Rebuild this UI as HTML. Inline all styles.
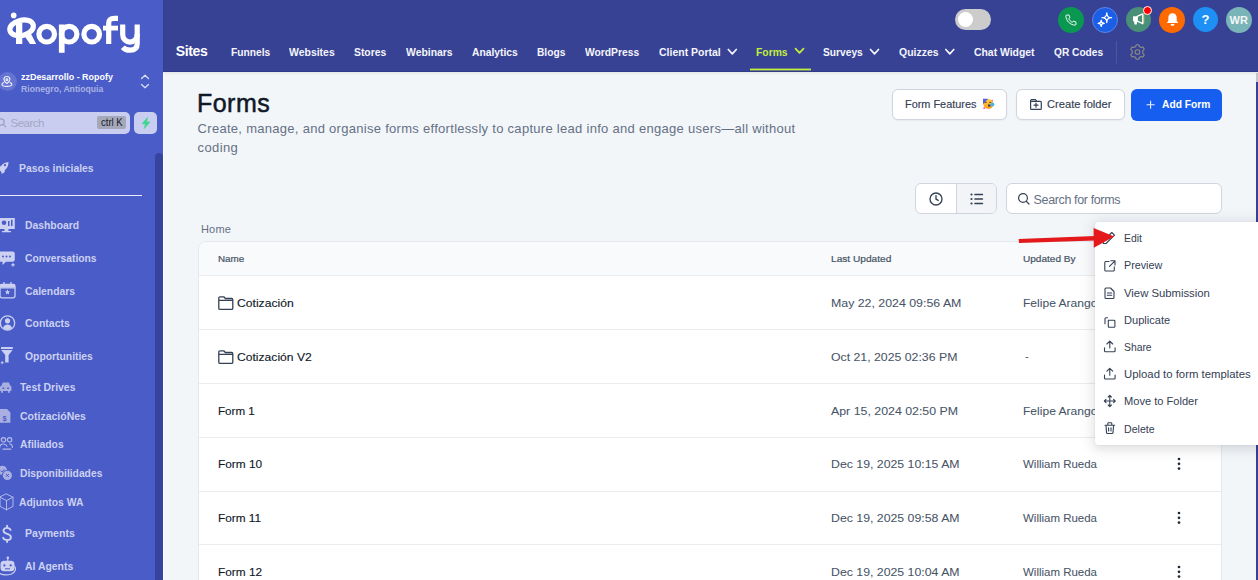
<!DOCTYPE html>
<html><head><meta charset="utf-8">
<style>
*{margin:0;padding:0;box-sizing:border-box}
html,body{width:1258px;height:580px;overflow:hidden;background:#f2f6f9;font-family:"Liberation Sans",sans-serif}
.a{position:absolute}
.t{position:absolute;white-space:nowrap}
svg{position:absolute;overflow:visible}
</style></head><body>
<!-- sidebar -->
<div class="a" style="left:0;top:0;width:163px;height:580px;background:#495cc8"></div>
<!-- scrollbar thumb sidebar -->
<div class="a" style="left:155px;top:153px;width:8px;height:440px;background:#37449e;border-radius:4px 4px 0 0"></div>
<div class="a" style="left:163px;top:72px;width:1px;height:508px;background:#fbfcfd"></div>
<!-- top nav -->
<div class="a" style="left:163px;top:0;width:1095px;height:72px;background:#384294;border-left:1px solid #354090"></div>
<div class="a" style="left:163px;top:71px;width:1095px;height:1px;background:#2f3a88"></div>
<div class="a" style="left:163px;top:72px;width:1095px;height:1px;background:#e6e9e6"></div>
<div class="a" style="left:164px;top:73px;width:1092px;height:3px;background:linear-gradient(#e9edef,#f2f6f9)"></div>
<!-- right strip -->
<div class="a" style="left:1256px;top:73px;width:2px;height:9px;background:#c4c6cc"></div>
<div class="a" style="left:1256px;top:82px;width:2px;height:498px;background:#384294"></div>

<!-- logo -->
<svg width="162" height="60" style="left:0;top:0" viewBox="0 0 162 60">
 <g fill="none" stroke="#fff" stroke-width="5.2">
  <ellipse cx="21.6" cy="27.8" rx="12" ry="7.6" transform="rotate(-14 21.6 27.8)"/>
  <circle cx="46.7" cy="34.2" r="7.8"/>
  <circle cx="69.1" cy="34.2" r="7.8"/>
  <circle cx="91.7" cy="34.2" r="7.8"/>
  <path d="M108.7 44.1V23.5C108.7 19.2 111 18.3 114.5 18.3H118"/>
  <path d="M122.7 24.4V34.8A7.25 7.25 0 0 0 137.2 34.8V24.4"/>
  <path d="M137.2 34V43.5C137.2 48.5 134 50.2 130.2 50.2C127 50.2 124.5 49.2 122.8 47.2"/>
 </g>
 <g fill="#fff">
  <circle cx="13.7" cy="15.4" r="2.8"/>
  <rect x="16" y="23" width="6.3" height="21"/>
  <polygon points="23,33.8 29.8,31.6 36.2,44 30,44"/>
  <rect x="58.9" y="24.5" width="5.7" height="28.3"/>
  <rect x="103" y="25.7" width="15" height="4.8"/>
 </g>
</svg>

<!-- location -->
<div class="a" style="left:-2.4px;top:72.3px;width:19px;height:19px;border-radius:50%;background:rgba(255,255,255,0.15)"></div>
<svg width="20" height="20" style="left:0;top:72" viewBox="0 72 20 20">
 <g fill="none" stroke="#eef0fb" stroke-width="1.15" stroke-linecap="round">
  <path d="M6.9 83.6C5 82 3.9 80.9 3.9 79.5A3 3 0 0 1 9.9 79.5C9.9 80.9 8.8 82 6.9 83.6Z"/>
  <circle cx="6.9" cy="79.7" r="0.9"/>
  <path d="M3.6 82.6C2.5 83 2 83.6 2 84.2C2 85.5 4.2 86.4 6.9 86.4C9.6 86.4 11.8 85.5 11.8 84.2C11.8 83.6 11.3 83 10.2 82.6"/>
 </g>
</svg>
<svg width="12" height="18" style="left:139;top:73" viewBox="0 0 12 18">
 <g fill="none" stroke="#d8dcf4" stroke-width="1.3" stroke-linecap="round" stroke-linejoin="round">
  <path d="M2.5 5.5L6 2.2L9.5 5.5"/><path d="M2.5 11.5L6 14.8L9.5 11.5"/>
 </g>
</svg>

<!-- search -->
<div class="a" style="left:-5px;top:112.2px;width:135px;height:21.7px;border-radius:5px;background:#c9cdef"></div>
<svg width="10" height="10" style="left:-2;top:118" viewBox="0 0 10 10"><g fill="none" stroke="#9a9fbd" stroke-width="1.2"><circle cx="3" cy="4" r="3.2"/><path d="M5.3 6.4L8 9"/></g></svg>
<div class="a" style="left:97px;top:116.2px;width:29px;height:12.7px;border-radius:2px;background:#a5a8b8"></div>
<div class="a" style="left:134px;top:112px;width:23px;height:22px;border-radius:5px;background:#c9cdef"></div>
<svg width="12" height="12" style="left:140;top:117" viewBox="0 0 12 12"><path d="M7.6 0.5L2 6.8H5.4L4.2 11.6L10 5H6.6Z" fill="#3dd68c" stroke="#3dd68c" stroke-width="0.6" stroke-linejoin="round"/></svg>

<!-- sidebar divider -->
<div class="a" style="left:0;top:194.5px;width:142px;height:1.5px;background:#e9ebf8"></div>

<!-- sidebar icons -->
<svg width="30" height="400" style="left:0;top:160" viewBox="0 160 30 400">
 <g fill="#ccd1f1">
  <!-- rocket -->
  <path d="M8.5 162C5.2 162.2 2.6 163.8 0.8 166.3L-2.5 166.3L-3 170.2L0 170.6L1.5 172.2L1.6 174L4.6 172.2L4.9 170C7.3 168.3 8.5 165.5 8.5 162Z"/><circle cx="5" cy="165.2" r="1.1" fill="#495cc8"/>
  <!-- dashboard monitor -->
  <path d="M-1 218H14.8V229H8.5V231H11V232.2H2V231H4.5V229H-1Z"/>
 </g>
 <g fill="#495cc8">
  <circle cx="4" cy="222.8" r="2.3"/><rect x="8" y="221" width="1.5" height="5"/><rect x="11" y="219.8" width="1.5" height="6.2"/>
 </g>
 <g fill="#ccd1f1">
  <!-- conversations bubble -->
  <path d="M0 251.5H12.5A2.3 2.3 0 0 1 14.8 253.8V259.5A2.3 2.3 0 0 1 12.5 261.8H6L2.5 265V261.8H0A2.3 2.3 0 0 1 -2.3 259.5V253.8A2.3 2.3 0 0 1 0 251.5Z"/>
 </g>
 <g fill="#495cc8"><circle cx="3" cy="256.6" r="1"/><circle cx="6.5" cy="256.6" r="1"/><circle cx="10" cy="256.6" r="1"/></g>
 <g fill="none" stroke="#ccd1f1" stroke-width="1.3">
  <path d="M13 263.2V266.5M11.3 264.8H14.7"/>
  <!-- calendar -->
  <rect x="0" y="284.5" width="15" height="13.3" rx="2"/>
  <path d="M0 287.8H15M4 282V285.5M11 282V285.5"/>
  <!-- contacts -->
  <circle cx="7.5" cy="323" r="7.2"/>
 </g>
 <g fill="#ccd1f1">
  <path d="M7.50 289.30L8.23 291.19L10.26 291.30L8.69 292.59L9.20 294.55L7.50 293.45L5.80 294.55L6.31 292.59L4.74 291.30L6.77 291.19Z"/><rect x="0" y="284" width="15" height="3.6" rx="1"/>
  <circle cx="7.5" cy="320.8" r="2.6"/>
  <path d="M3 327.8C4 325.3 5.6 324.6 7.5 324.6C9.4 324.6 11 325.3 12 327.8C10.8 329.3 9.2 330 7.5 330C5.8 330 4.2 329.3 3 327.8Z"/>
  <!-- funnel -->
  <path d="M1 347H12.8V349H1Z M1.2 350H12.6L8.6 355V362.5H5.2V355Z"/>
  <path d="M2.2 361.2V364.2M0.7 362.7H3.7" stroke="#ccd1f1" stroke-width="0.9"/>
  <!-- car -->
  <path fill="#a9b0e1" d="M1.2 386.2L2.8 382.6H8.9L10.6 386.2H11.4V391H9.8V392.8H7.9V391H3V392.8H1.1V391H-0.5V386.2Z"/>
  <!-- doc $ -->
  <path fill="#a9b0e1" d="M-1 409H7L10.4 412.4V422.8H-1Z"/>
  <!-- people -->
 </g>
 <g fill="none" stroke="#495cc8" stroke-width="1.5"><path d="M2.5 388.3H4.2M7.2 388.3H8.9"/></g>
 <text x="2.5" y="420.5" font-family="Liberation Sans" font-weight="700" font-size="7.5" fill="#495cc8">$</text>
 <g fill="none" stroke="#ccd1f1" stroke-width="1.2" stroke-linecap="round">
  <g stroke="#b5bbe8"><circle cx="3.5" cy="439.8" r="2.2"/><circle cx="9.6" cy="439.8" r="2.2"/>
  <path d="M-0.5 449C-0.5 445.5 1.5 444 3.5 444C5.2 444 6.4 445 7 446.3M12.4 447.5C12.4 445 11 444 9.6 444"/>
  <path d="M3 449.2H10.8"/></g>
  <!-- disponibilidades -->
  <!-- cube -->
  <path d="M6.5 494L13 497.2V506.4L6.5 509.8L0 506.4V497.2Z M0 497.2L6.5 500.6L13 497.2 M6.5 500.6V509.8" stroke="#b3b9e8" stroke-width="1"/>
 </g>
 <g fill="#a9b0e1"><circle cx="2.4" cy="470.3" r="4.6"/><circle cx="7.4" cy="475.4" r="5.6" fill="#495cc8"/><circle cx="7.4" cy="475.4" r="4.6"/></g><path d="M0.5 470.5L2 472L4.5 469" fill="none" stroke="#495cc8" stroke-width="0.9"/>
 <g fill="none" stroke="#495cc8" stroke-width="1"><path d="M6 474L8.8 476.8M8.8 474L6 476.8"/></g>
 <path d="M10.6 530C10 528.6 8.7 527.9 7 527.9C4.9 527.9 3.5 529 3.5 530.8C3.5 535 10.9 532.9 10.9 537.2C10.9 539 9.4 540 7.1 540C5.1 540 3.8 539.2 3.1 537.8M7.1 525.8V527.9M7.1 540V542" fill="none" stroke="#ccd1f1" stroke-width="1.9" stroke-linecap="round"/>
 <g fill="#ccd1f1">
  <!-- robot -->
  <circle cx="7.8" cy="557.8" r="1.3"/><rect x="7.2" y="558" width="1.2" height="3"/>
  <rect x="0.5" y="560.8" width="14" height="10.5" rx="3.5"/>
 </g>
 <g fill="#495cc8"><rect x="3.3" y="564.2" width="2.2" height="2.4" rx="1"/><rect x="9.6" y="564.2" width="2.2" height="2.4" rx="1"/><rect x="5" y="568.3" width="5" height="1" /></g>
 <g fill="none" stroke="#ccd1f1" stroke-width="1.1"><path d="M14.5 566C16.5 568.5 15.5 572.8 11 574.2C7 575.2 2 574.6 0 573.6"/></g>
</svg>

<!-- top icons -->
<div class="a" style="left:955px;top:9px;width:36px;height:21px;border-radius:11px;background:#cccccc"></div>
<div class="a" style="left:958px;top:11.8px;width:15.3px;height:15.3px;border-radius:50%;background:#ffffff"></div>
<div class="a" style="left:1058px;top:6.5px;width:26px;height:26px;border-radius:50%;background:#0a9851"></div>
<svg width="14" height="14" style="left:1064;top:12.5" viewBox="0 0 24 24"><path d="M5 3.5H8.5L10.3 8L8 9.7C9 12 11.5 14.8 14.3 16L16 13.7L20.5 15.5V19A1.7 1.7 0 0 1 18.7 20.8C10.5 20.3 3.7 13.5 3.2 5.3A1.7 1.7 0 0 1 5 3.5Z" fill="none" stroke="#fff" stroke-width="1.6" stroke-linejoin="round"/></svg>
<div class="a" style="left:1092px;top:6.5px;width:26px;height:26px;border-radius:50%;background:#1a5fe6;border:1px solid #5b84ea"></div>
<svg width="20" height="20" style="left:1095;top:8" viewBox="1095 8 20 20">
 <g fill="none" stroke="#fff" stroke-width="1.25" stroke-linejoin="round">
  <path d="M1106.8 12.899999999999999Q1106.8 17.7 1111.6 17.7Q1106.8 17.7 1106.8 22.5Q1106.8 17.7 1102.0 17.7Q1106.8 17.7 1106.8 12.899999999999999Z"/>
  <path d="M1101.2 20.2Q1101.2 23.3 1104.3 23.3Q1101.2 23.3 1101.2 26.400000000000002Q1101.2 23.3 1098.1000000000001 23.3Q1101.2 23.3 1101.2 20.2Z"/>
 </g>
</svg>
<div class="a" style="left:1126px;top:7px;width:25px;height:25px;border-radius:50%;background:#4a8f77"></div>
<svg width="20" height="20" style="left:1128;top:9" viewBox="1128 9 20 20">
 <rect x="1133" y="16.3" width="4.2" height="4.9" fill="#fff"/>
 <path d="M1133.9 21H1137.1L1136.8 24.6H1134.5Z" fill="#fff"/>
 <path d="M1137.2 16.4L1142.8 13.9V23.7L1137.2 21.1Z" fill="#4a8f77" stroke="#fff" stroke-width="1.4" stroke-linejoin="round"/>
 <path d="M1143.8 14.5V23.2" stroke="#e8d58a" stroke-width="0.7"/>
</svg>
<div class="a" style="left:1142.5px;top:5.8px;width:9.6px;height:9.6px;border-radius:50%;background:#ff0000;border:1px solid #fff"></div>
<div class="a" style="left:1159px;top:7px;width:26px;height:26px;border-radius:50%;background:#ff6a00"></div>
<svg width="15" height="15" style="left:1164.5;top:11.5" viewBox="0 0 24 24"><path d="M12 1.8C7.8 1.8 5.3 4.8 5.3 9.2V14.2L2.6 17.6H21.4L18.7 14.2V9.2C18.7 4.8 16.2 1.8 12 1.8Z M8.8 19.2H15.2C14.8 21.2 13.6 22.3 12 22.3C10.4 22.3 9.2 21.2 8.8 19.2Z" fill="#fff"/></svg>
<div class="a" style="left:1193px;top:7px;width:25px;height:25px;border-radius:50%;background:#1e8ff5"></div>
<div class="a" style="left:1226px;top:7px;width:26px;height:26px;border-radius:50%;background:#79b4b8"></div>

<!-- nav chevrons, underline, separator, gear -->
<svg width="1258" height="80" style="left:0;top:0" viewBox="0 0 1258 80">
 <g fill="none" stroke="#f4f5fb" stroke-width="1.7" stroke-linecap="round" stroke-linejoin="round">
  <path d="M728.3 49.5L732.3 53.8L736.3 49.5"/>
  <path d="M870.5 49.5L874.5 53.8L878.5 49.5"/>
  <path d="M945.8 49.5L949.8 53.8L953.8 49.5"/>
 </g>
 <path d="M795.5 48.6L799.5 52.8L803.5 48.6" fill="none" stroke="#c3ee3c" stroke-width="1.7" stroke-linecap="round" stroke-linejoin="round"/>
 <rect x="750" y="68.6" width="61" height="1.8" fill="#c3ee3c"/>
 <rect x="1116" y="41" width="1" height="22.5" fill="#4e579e"/>
 <g transform="translate(1137.5 52)" fill="none" stroke="#8b8d84" stroke-width="1.1">
  <circle r="2.3"/>
  <path d="M-1.3 -7.3H1.3L1.8 -5.4L3.6 -4.4L5.5 -5L6.8 -2.8L5.3 -1.4V1.4L6.8 2.8L5.5 5L3.6 4.4L1.8 5.4L1.3 7.3H-1.3L-1.8 5.4L-3.6 4.4L-5.5 5L-6.8 2.8L-5.3 1.4V-1.4L-6.8 -2.8L-5.5 -5L-3.6 -4.4L-1.8 -5.4Z" stroke-linejoin="round"/>
 </g>
</svg>

<!-- header buttons -->
<div class="a" style="left:892px;top:89px;width:115px;height:31px;border-radius:6px;background:#fff;border:1px solid #d0d5dd;box-shadow:0 1px 2px rgba(16,24,40,0.05)"></div>
<svg width="14" height="14" style="left:981;top:97" viewBox="981 97 14 14">
 <defs><linearGradient id="fg" x1="0" y1="0" x2="0" y2="1"><stop offset="0" stop-color="#ffd43b"/><stop offset="1" stop-color="#ff9a1f"/></linearGradient></defs>
 <circle cx="988.4" cy="104" r="5.1" fill="url(#fg)"/>
 <path d="M983 98.7H988.3L983 104.2Z" fill="#5b5ce6"/>
 <path d="M984.6 102.4H986.6M989.2 102.4H991.2" stroke="#5a3a2a" stroke-width="0.9"/>
 <path d="M988 104.5H990.5V106.6H988Z" fill="#3a3a5a"/>
 <circle cx="992.4" cy="104.4" r="1.9" fill="#42b4f0"/>
 <circle cx="984.2" cy="108.2" r="0.9" fill="#ff4fa3"/><circle cx="992.3" cy="100.5" r="0.8" fill="#ff4fa3"/>
</svg>
<div class="a" style="left:1016px;top:89px;width:109px;height:31px;border-radius:6px;background:#fff;border:1px solid #d0d5dd;box-shadow:0 1px 2px rgba(16,24,40,0.05)"></div>
<svg width="16" height="16" style="left:1028;top:96" viewBox="1028 96 16 16"><g fill="none" stroke="#344054" stroke-width="1.2" stroke-linejoin="round" stroke-linecap="round"><path d="M1031.2 99.6H1035.4L1036.6 101.2"/><path d="M1030.6 100.4V108.4A0.9 0.9 0 0 0 1031.5 109.3H1040.4A0.9 0.9 0 0 0 1041.3 108.4V102.2A0.9 0.9 0 0 0 1040.4 101.3H1031.5"/><path d="M1034 105.2H1038M1036 103.2V107.2"/></g></svg>
<div class="a" style="left:1131px;top:89px;width:91px;height:32px;border-radius:6px;background:#155eef"></div>
<svg width="10" height="10" style="left:1145.5;top:99.5" viewBox="0 0 10 10"><path d="M4.6 0.8V8.8M0.6 4.8H8.6" stroke="#e8eefe" stroke-width="1.1"/></svg>

<!-- view toggle + search -->
<div class="a" style="left:915px;top:183px;width:82px;height:31px;border-radius:6px;background:#fff;border:1px solid #d0d5dd;overflow:hidden"><div class="a" style="left:40px;top:0;width:41px;height:31px;background:#f2f4f7;border-left:1px solid #d0d5dd"></div></div>
<svg width="14" height="14" style="left:929;top:192" viewBox="0 0 14 14"><g fill="none" stroke="#344054" stroke-width="1.35" stroke-linecap="round"><circle cx="7" cy="7" r="6"/><path d="M7 3.6V7L9.2 8.3"/></g></svg>
<svg width="14" height="14" style="left:970;top:192" viewBox="0 0 14 14"><g fill="#344054"><circle cx="1.5" cy="2.5" r="1.1"/><circle cx="1.5" cy="7" r="1.1"/><circle cx="1.5" cy="11.5" r="1.1"/><rect x="4.2" y="1.7" width="9" height="1.6" rx="0.8"/><rect x="4.2" y="6.2" width="9" height="1.6" rx="0.8"/><rect x="4.2" y="10.7" width="9" height="1.6" rx="0.8"/></g></svg>
<div class="a" style="left:1006px;top:183px;width:216px;height:31px;border-radius:6px;background:#fff;border:1px solid #d0d5dd"></div>
<svg width="12" height="12" style="left:1017.5;top:193" viewBox="0 0 12 12"><g fill="none" stroke="#344054" stroke-width="1.2" stroke-linecap="round"><circle cx="5" cy="5" r="4.4"/><path d="M8.3 8.3L11 11"/></g></svg>

<!-- table -->
<div class="a" style="left:198px;top:241px;width:1024px;height:360px;border-radius:8px;background:#fff;border:1px solid #e4e7ec;overflow:hidden">
 <div class="a" style="left:0;top:0;width:1024px;height:34px;background:#f9fafb;border-bottom:1px solid #eaecf0"></div>
 <div class="a" style="left:0;top:87px;width:1024px;height:1px;background:#eaecf0"></div>
 <div class="a" style="left:0;top:141px;width:1024px;height:1px;background:#eaecf0"></div>
 <div class="a" style="left:0;top:195px;width:1024px;height:1px;background:#eaecf0"></div>
 <div class="a" style="left:0;top:249px;width:1024px;height:1px;background:#eaecf0"></div>
 <div class="a" style="left:0;top:302px;width:1024px;height:1px;background:#eaecf0"></div>
</div>
<svg width="16" height="14" style="left:218;top:296" viewBox="0 0 16 14"><path d="M0.8 2A1.2 1.2 0 0 1 2 0.8H5.8L7.3 2.5H13.6A1.2 1.2 0 0 1 14.8 3.7V12.2A1.2 1.2 0 0 1 13.6 13.4H2A1.2 1.2 0 0 1 0.8 12.2Z M0.8 4.3H14.8" fill="none" stroke="#344054" stroke-width="1.3" stroke-linejoin="round"/></svg>
<svg width="16" height="14" style="left:218;top:350" viewBox="0 0 16 14"><path d="M0.8 2A1.2 1.2 0 0 1 2 0.8H5.8L7.3 2.5H13.6A1.2 1.2 0 0 1 14.8 3.7V12.2A1.2 1.2 0 0 1 13.6 13.4H2A1.2 1.2 0 0 1 0.8 12.2Z M0.8 4.3H14.8" fill="none" stroke="#344054" stroke-width="1.3" stroke-linejoin="round"/></svg>
<svg width="6" height="400" style="left:1176;top:440" viewBox="0 0 6 400"><g fill="#1d2939"><circle cx="3" cy="19" r="1.35"/><circle cx="3" cy="23.8" r="1.35"/><circle cx="3" cy="28.6" r="1.35"/><circle cx="3" cy="73" r="1.35"/><circle cx="3" cy="77.8" r="1.35"/><circle cx="3" cy="82.6" r="1.35"/><circle cx="3" cy="127" r="1.35"/><circle cx="3" cy="131.8" r="1.35"/><circle cx="3" cy="136.6" r="1.35"/></g></svg>

<span class="t" style="left:175.70px;top:44px;font-size:14px;line-height:14px;font-weight:700;color:#ffffff;letter-spacing:-0.369px;">Sites</span>
<span class="t" style="left:230.80px;top:47px;font-size:11px;line-height:11px;font-weight:700;color:#f4f5fb;transform:scaleX(0.9298);transform-origin:0 0;">Funnels</span>
<span class="t" style="left:289.20px;top:47px;font-size:11px;line-height:11px;font-weight:700;color:#f4f5fb;transform:scaleX(0.9505);transform-origin:0 0;">Websites</span>
<span class="t" style="left:354.40px;top:47px;font-size:11px;line-height:11px;font-weight:700;color:#f4f5fb;transform:scaleX(0.9409);transform-origin:0 0;">Stores</span>
<span class="t" style="left:406.00px;top:47px;font-size:11px;line-height:11px;font-weight:700;color:#f4f5fb;transform:scaleX(0.9452);transform-origin:0 0;">Webinars</span>
<span class="t" style="left:472.20px;top:47px;font-size:11px;line-height:11px;font-weight:700;color:#f4f5fb;transform:scaleX(0.9366);transform-origin:0 0;">Analytics</span>
<span class="t" style="left:537.30px;top:47px;font-size:11px;line-height:11px;font-weight:700;color:#f4f5fb;transform:scaleX(0.9265);transform-origin:0 0;">Blogs</span>
<span class="t" style="left:585.00px;top:47px;font-size:11px;line-height:11px;font-weight:700;color:#f4f5fb;transform:scaleX(0.9350);transform-origin:0 0;">WordPress</span>
<span class="t" style="left:658.70px;top:47px;font-size:11px;line-height:11px;font-weight:700;color:#f4f5fb;transform:scaleX(0.9532);transform-origin:0 0;">Client Portal</span>
<span class="t" style="left:823.30px;top:47px;font-size:11px;line-height:11px;font-weight:700;color:#f4f5fb;transform:scaleX(0.9300);transform-origin:0 0;">Surveys</span>
<span class="t" style="left:898.50px;top:47px;font-size:11px;line-height:11px;font-weight:700;color:#f4f5fb;transform:scaleX(0.9506);transform-origin:0 0;">Quizzes</span>
<span class="t" style="left:973.70px;top:47px;font-size:11px;line-height:11px;font-weight:700;color:#f4f5fb;transform:scaleX(0.9457);transform-origin:0 0;">Chat Widget</span>
<span class="t" style="left:1054.00px;top:47px;font-size:11px;line-height:11px;font-weight:700;color:#f4f5fb;transform:scaleX(0.9235);transform-origin:0 0;">QR Codes</span>
<span class="t" style="left:756.20px;top:47px;font-size:11px;line-height:11px;font-weight:700;color:#c3ee3c;transform:scaleX(0.9403);transform-origin:0 0;">Forms</span>
<span class="t" style="left:1229.50px;top:15px;font-size:11px;line-height:11px;font-weight:700;color:#f3f7f7;letter-spacing:0.118px;">WR</span>
<span class="t" style="left:1201.50px;top:13px;font-size:13px;line-height:13px;font-weight:700;color:#ffffff;">?</span>
<span class="t" style="left:21.00px;top:72px;font-size:9.6px;line-height:9.6px;font-weight:700;color:#ffffff;transform:scaleX(0.9317);transform-origin:0 0;">zzDesarrollo - Ropofy</span>
<span class="t" style="left:21.00px;top:84px;font-size:9.8px;line-height:9.8px;font-weight:700;color:#aab2e4;transform:scaleX(0.8815);transform-origin:0 0;">Rionegro, Antioquia</span>
<span class="t" style="left:10.50px;top:118px;font-size:11.5px;line-height:11.5px;font-weight:400;color:#a3a7c4;letter-spacing:-0.508px;">Search</span>
<span class="t" style="left:100.70px;top:118px;font-size:10px;line-height:10px;font-weight:400;color:#15192a;transform:scaleX(0.9520);transform-origin:0 0;">ctrl K</span>
<span class="t" style="left:19.40px;top:163px;font-size:11.3px;line-height:11.3px;font-weight:700;color:#ccd1f1;transform:scaleX(0.9216);transform-origin:0 0;">Pasos iniciales</span>
<span class="t" style="left:24.80px;top:220px;font-size:11.3px;line-height:11.3px;font-weight:700;color:#ccd1f1;transform:scaleX(0.9170);transform-origin:0 0;">Dashboard</span>
<span class="t" style="left:25.10px;top:253px;font-size:11.3px;line-height:11.3px;font-weight:700;color:#ccd1f1;transform:scaleX(0.9119);transform-origin:0 0;">Conversations</span>
<span class="t" style="left:25.00px;top:286px;font-size:11.3px;line-height:11.3px;font-weight:700;color:#ccd1f1;transform:scaleX(0.9146);transform-origin:0 0;">Calendars</span>
<span class="t" style="left:25.00px;top:318px;font-size:11.3px;line-height:11.3px;font-weight:700;color:#ccd1f1;transform:scaleX(0.9261);transform-origin:0 0;">Contacts</span>
<span class="t" style="left:25.00px;top:351px;font-size:11.3px;line-height:11.3px;font-weight:700;color:#ccd1f1;transform:scaleX(0.9164);transform-origin:0 0;">Opportunities</span>
<span class="t" style="left:19.60px;top:382px;font-size:11.3px;line-height:11.3px;font-weight:700;color:#ccd1f1;transform:scaleX(0.9233);transform-origin:0 0;">Test Drives</span>
<span class="t" style="left:19.60px;top:411px;font-size:11.3px;line-height:11.3px;font-weight:700;color:#ccd1f1;transform:scaleX(0.9299);transform-origin:0 0;">CotizacióNes</span>
<span class="t" style="left:19.60px;top:439px;font-size:11.3px;line-height:11.3px;font-weight:700;color:#ccd1f1;transform:scaleX(0.9152);transform-origin:0 0;">Afiliados</span>
<span class="t" style="left:19.60px;top:468px;font-size:11.3px;line-height:11.3px;font-weight:700;color:#ccd1f1;transform:scaleX(0.9112);transform-origin:0 0;">Disponibilidades</span>
<span class="t" style="left:19.30px;top:497px;font-size:11.3px;line-height:11.3px;font-weight:700;color:#ccd1f1;transform:scaleX(0.9170);transform-origin:0 0;">Adjuntos WA</span>
<span class="t" style="left:25.00px;top:528px;font-size:11.3px;line-height:11.3px;font-weight:700;color:#ccd1f1;transform:scaleX(0.9324);transform-origin:0 0;">Payments</span>
<span class="t" style="left:25.00px;top:561px;font-size:11.3px;line-height:11.3px;font-weight:700;color:#ccd1f1;transform:scaleX(0.9211);transform-origin:0 0;">AI Agents</span>
<span class="t" style="left:196.90px;top:91px;font-size:25px;line-height:25px;font-weight:400;color:#101828;letter-spacing:0.519px;-webkit-text-stroke:0.5px #101828;">Forms</span>
<span class="t" style="left:197.60px;top:122px;font-size:13px;line-height:13px;font-weight:400;color:#667085;letter-spacing:0.288px;">Create, manage, and organise forms effortlessly to capture lead info and engage users—all without</span>
<span class="t" style="left:197.60px;top:141px;font-size:13px;line-height:13px;font-weight:400;color:#667085;letter-spacing:0.384px;">coding</span>
<span class="t" style="left:905.10px;top:99px;font-size:11.3px;line-height:11.3px;font-weight:400;color:#344054;transform:scaleX(0.9647);transform-origin:0 0;-webkit-text-stroke:0.15px #344054;">Form Features</span>
<span class="t" style="left:1047.00px;top:99px;font-size:11.3px;line-height:11.3px;font-weight:400;color:#344054;transform:scaleX(0.9871);transform-origin:0 0;-webkit-text-stroke:0.15px #344054;">Create folder</span>
<span class="t" style="left:1161.70px;top:99px;font-size:11.3px;line-height:11.3px;font-weight:700;color:#ffffff;transform:scaleX(0.9063);transform-origin:0 0;">Add Form</span>
<span class="t" style="left:1033.60px;top:194px;font-size:12.5px;line-height:12.5px;font-weight:400;color:#667085;letter-spacing:-0.369px;">Search for forms</span>
<span class="t" style="left:201.00px;top:224px;font-size:11px;line-height:11px;font-weight:400;color:#667085;letter-spacing:0.158px;">Home</span>
<span class="t" style="left:218.20px;top:255px;font-size:9.2px;line-height:9.2px;font-weight:400;color:#475467;transform:scaleX(1.0698);transform-origin:0 0;-webkit-text-stroke:0.2px #475467;">Name</span>
<span class="t" style="left:831.10px;top:255px;font-size:9.2px;line-height:9.2px;font-weight:400;color:#475467;transform:scaleX(1.1037);transform-origin:0 0;-webkit-text-stroke:0.2px #475467;">Last Updated</span>
<span class="t" style="left:1023.00px;top:255px;font-size:9.2px;line-height:9.2px;font-weight:400;color:#475467;transform:scaleX(1.0947);transform-origin:0 0;-webkit-text-stroke:0.2px #475467;">Updated By</span>
<span class="t" style="left:237.10px;top:298px;font-size:10.9px;line-height:10.9px;font-weight:400;color:#101828;transform:scaleX(1.1144);transform-origin:0 0;-webkit-text-stroke:0.12px #101828;">Cotización</span>
<span class="t" style="left:831.10px;top:298px;font-size:10.9px;line-height:10.9px;font-weight:400;color:#475467;transform:scaleX(1.1336);transform-origin:0 0;-webkit-text-stroke:0.05px #475467;">May 22, 2024 09:56 AM</span>
<span class="t" style="left:1023.10px;top:298px;font-size:10.9px;line-height:10.9px;font-weight:400;color:#475467;transform:scaleX(1.1070);transform-origin:0 0;-webkit-text-stroke:0.05px #475467;">Felipe Arango</span>
<span class="t" style="left:237.10px;top:352px;font-size:10.9px;line-height:10.9px;font-weight:400;color:#101828;transform:scaleX(1.1126);transform-origin:0 0;-webkit-text-stroke:0.12px #101828;">Cotización V2</span>
<span class="t" style="left:831.10px;top:352px;font-size:10.9px;line-height:10.9px;font-weight:400;color:#475467;transform:scaleX(1.1284);transform-origin:0 0;-webkit-text-stroke:0.05px #475467;">Oct 21, 2025 02:36 PM</span>
<span class="t" style="left:1024.90px;top:351px;font-size:10.9px;line-height:10.9px;font-weight:400;color:#475467;">-</span>
<span class="t" style="left:218.30px;top:406px;font-size:10.9px;line-height:10.9px;font-weight:400;color:#101828;transform:scaleX(1.0658);transform-origin:0 0;-webkit-text-stroke:0.12px #101828;">Form 1</span>
<span class="t" style="left:831.10px;top:406px;font-size:10.9px;line-height:10.9px;font-weight:400;color:#475467;transform:scaleX(1.1346);transform-origin:0 0;-webkit-text-stroke:0.05px #475467;">Apr 15, 2024 02:50 PM</span>
<span class="t" style="left:1023.10px;top:406px;font-size:10.9px;line-height:10.9px;font-weight:400;color:#475467;transform:scaleX(1.1070);transform-origin:0 0;-webkit-text-stroke:0.05px #475467;">Felipe Arango</span>
<span class="t" style="left:218.30px;top:459px;font-size:10.9px;line-height:10.9px;font-weight:400;color:#101828;transform:scaleX(1.0867);transform-origin:0 0;-webkit-text-stroke:0.12px #101828;">Form 10</span>
<span class="t" style="left:831.10px;top:459px;font-size:10.9px;line-height:10.9px;font-weight:400;color:#475467;transform:scaleX(1.1298);transform-origin:0 0;-webkit-text-stroke:0.05px #475467;">Dec 19, 2025 10:15 AM</span>
<span class="t" style="left:1022.80px;top:459px;font-size:10.9px;line-height:10.9px;font-weight:400;color:#475467;transform:scaleX(1.0542);transform-origin:0 0;-webkit-text-stroke:0.05px #475467;">William Rueda</span>
<span class="t" style="left:218.30px;top:513px;font-size:10.9px;line-height:10.9px;font-weight:400;color:#101828;transform:scaleX(1.0836);transform-origin:0 0;-webkit-text-stroke:0.12px #101828;">Form 11</span>
<span class="t" style="left:831.10px;top:513px;font-size:10.9px;line-height:10.9px;font-weight:400;color:#475467;transform:scaleX(1.1298);transform-origin:0 0;-webkit-text-stroke:0.05px #475467;">Dec 19, 2025 09:58 AM</span>
<span class="t" style="left:1022.80px;top:513px;font-size:10.9px;line-height:10.9px;font-weight:400;color:#475467;transform:scaleX(1.0542);transform-origin:0 0;-webkit-text-stroke:0.05px #475467;">William Rueda</span>
<span class="t" style="left:218.30px;top:567px;font-size:10.9px;line-height:10.9px;font-weight:400;color:#101828;transform:scaleX(1.0867);transform-origin:0 0;-webkit-text-stroke:0.12px #101828;">Form 12</span>
<span class="t" style="left:831.10px;top:567px;font-size:10.9px;line-height:10.9px;font-weight:400;color:#475467;transform:scaleX(1.1298);transform-origin:0 0;-webkit-text-stroke:0.05px #475467;">Dec 19, 2025 10:04 AM</span>
<span class="t" style="left:1022.80px;top:567px;font-size:10.9px;line-height:10.9px;font-weight:400;color:#475467;transform:scaleX(1.0542);transform-origin:0 0;-webkit-text-stroke:0.05px #475467;">William Rueda</span>
<!-- dropdown -->
<div class="a" style="left:1095px;top:222px;width:180px;height:223px;border-radius:4px;background:#fff;box-shadow:0 2px 14px 3px rgba(16,24,40,0.10),0 4px 6px rgba(16,24,40,0.04),0 0 0 1px rgba(16,24,40,0.02)"></div>
<svg width="40" height="230" style="left:1098;top:222" viewBox="1098 222 40 230">
 <g fill="none" stroke="#344054" stroke-width="1.1" stroke-linecap="round" stroke-linejoin="round">
  <path d="M1111.8 232.5L1114.5 235.2L1106 243.5H1103.3V240.8Z"/>
  <path d="M1109 261.5H1105.8A1 1 0 0 0 1104.8 262.5V270A1 1 0 0 0 1105.8 271H1113.3A1 1 0 0 0 1114.3 270V266.8 M1110.8 260.8H1115V265 M1115 260.8L1109.5 266.3"/>
  <path d="M1105 289A1 1 0 0 1 1106 288H1110.5L1114 291.5V297.5A1 1 0 0 1 1113 298.5H1106A1 1 0 0 1 1105 297.5Z M1107.3 293H1111.7M1107.3 295.3H1111.7"/>
  <path d="M1107.5 317.8H1106A1 1 0 0 0 1105 318.8V323.8 M1108.3 320.3H1114A0.9 0.9 0 0 1 1114.9 321.2V326.4A0.9 0.9 0 0 1 1114 327.3H1109.2A0.9 0.9 0 0 1 1108.3 326.4Z"/>
  <path d="M1104.5 347.8V350.8A1 1 0 0 0 1105.5 351.8H1114.1A1 1 0 0 0 1115.1 350.8V347.8 M1109.8 348V341.3 M1106.9 344L1109.8 341.1L1112.7 344"/>
  <path d="M1104.5 375V378A1 1 0 0 0 1105.5 379H1114.1A1 1 0 0 0 1115.1 378V375 M1109.8 375.2V368.5 M1106.9 371.2L1109.8 368.3L1112.7 371.2"/>
  <path d="M1109.8 395.5V406.5M1104.3 401H1115.3 M1108.2 397L1109.8 395.4L1111.4 397 M1108.2 405L1109.8 406.6L1111.4 405 M1106 399.4L1104.4 401L1106 402.6 M1113.6 399.4L1115.2 401L1113.6 402.6"/>
  <path d="M1105 425.3H1114.6 M1106 425.3L1106.5 432.6A1 1 0 0 0 1107.5 433.5H1112A1 1 0 0 0 1113 432.6L1113.6 425.3 M1107.8 425V423.6A0.8 0.8 0 0 1 1108.6 422.8H1111A0.8 0.8 0 0 1 1111.8 423.6V425 M1108.6 427.8V431 M1111 427.8V431"/>
 </g>
</svg>
<span class="t" style="left:1123.70px;top:233px;font-size:11.8px;line-height:11.8px;font-weight:400;color:#344054;transform:scaleX(0.8836);transform-origin:0 0;">Edit</span>
<span class="t" style="left:1123.70px;top:260px;font-size:11.8px;line-height:11.8px;font-weight:400;color:#344054;transform:scaleX(0.9119);transform-origin:0 0;">Preview</span>
<span class="t" style="left:1123.70px;top:288px;font-size:11.8px;line-height:11.8px;font-weight:400;color:#344054;transform:scaleX(0.9579);transform-origin:0 0;">View Submission</span>
<span class="t" style="left:1123.70px;top:315px;font-size:11.8px;line-height:11.8px;font-weight:400;color:#344054;transform:scaleX(0.9391);transform-origin:0 0;">Duplicate</span>
<span class="t" style="left:1123.70px;top:342px;font-size:11.8px;line-height:11.8px;font-weight:400;color:#344054;transform:scaleX(0.8772);transform-origin:0 0;">Share</span>
<span class="t" style="left:1123.70px;top:369px;font-size:11.8px;line-height:11.8px;font-weight:400;color:#344054;transform:scaleX(0.9614);transform-origin:0 0;">Upload to form templates</span>
<span class="t" style="left:1123.70px;top:396px;font-size:11.8px;line-height:11.8px;font-weight:400;color:#344054;transform:scaleX(0.9397);transform-origin:0 0;">Move to Folder</span>
<span class="t" style="left:1123.70px;top:424px;font-size:11.8px;line-height:11.8px;font-weight:400;color:#344054;transform:scaleX(0.8975);transform-origin:0 0;">Delete</span>
<svg width="1258" height="580" style="left:0;top:0" viewBox="0 0 1258 580">
 <path d="M1018.7 238.9L1095 235.9L1095.3 240.4L1019 243.1Z" fill="#e3191b"/>
 <path d="M1093.6 227.9L1114.2 236.5L1093.8 247.8Z" fill="#e3191b"/>
</svg>
</body></html>
